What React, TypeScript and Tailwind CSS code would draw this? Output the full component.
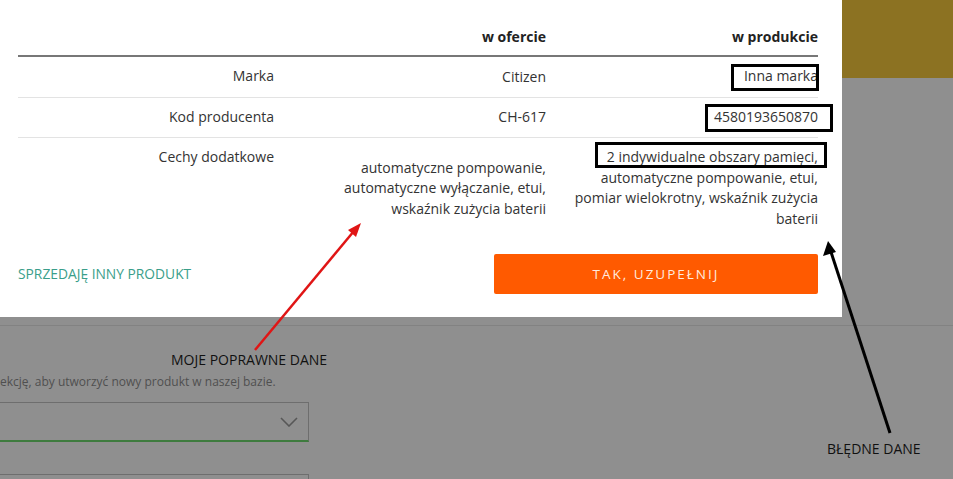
import React from 'react';

const font = { fontFamily: '"Open Sans", "Liberation Sans", sans-serif' };

const rows = [
  { label: 'Marka', offer: ['Citizen'], prod: ['Inna marka'] },
  { label: 'Kod producenta', offer: ['CH-617'], prod: ['4580193650870'] },
  {
    label: 'Cechy dodatkowe',
    offer: ['automatyczne pompowanie,', 'automatyczne wyłączanie, etui,', 'wskaźnik zużycia baterii'],
    prod: ['2 indywidualne obszary pamięci,', 'automatyczne pompowanie, etui,', 'pomiar wielokrotny, wskaźnik zużycia', 'baterii'],
  },
];

const Lines = ({ lines }: { lines: string[] }) => (
  <>
    {lines.map((l, i) => (
      <div key={i}>{l}</div>
    ))}
  </>
);

export default function App() {
  return (
    <div className="relative w-[953px] h-[479px] overflow-hidden bg-[#8f8f8f] text-[#333]" style={font}>
      {/* page behind the modal */}
      <div className="flex flex-col">
        <div className="flex justify-end">
          <div className="w-[111px] h-[78px] bg-[#8c7222]" />
        </div>
        <div className="mt-[247px] h-px bg-[#828282]" />
        <div className="w-[309px] pt-[48px]">
          <p className="text-[12px] leading-[16px] text-[#4f4f4f] whitespace-nowrap">
            ekcję, aby utworzyć nowy produkt w naszej bazie.
          </p>
          <div className="mt-[12px] h-[40px] -ml-[10px] w-[319px] border border-[#6e6e6e] border-b-2 border-b-[#3e7b3e] flex items-center justify-end pr-[10px]">
            <svg width="18" height="10" viewBox="0 0 18 10" fill="none">
              <path d="M1 1l8 8 8-8" stroke="#575757" strokeWidth="1.6" />
            </svg>
          </div>
          <div className="mt-[32px] h-[40px] -ml-[10px] w-[319px] border border-[#6e6e6e]" />
        </div>
      </div>

      {/* modal */}
      <div className="absolute left-0 top-0 w-[842px] h-[317px] bg-white px-[18px]">
        <div className="w-[800px]">
          <div className="grid grid-cols-[256px_272px_272px] pt-[27px] pb-[8px] border-b-2 border-[#777] text-[14px] leading-[20px] font-bold text-[#222]">
            <div />
            <div className="text-right">w ofercie</div>
            <div className="text-right">w produkcie</div>
          </div>
          {rows.map((r, i) => (
            <div
              key={r.label}
              className={`grid grid-cols-[256px_272px_272px] text-[14px] ${i < rows.length - 1 ? 'border-b border-[#e3e3e3]' : ''}`}
            >
              <div className="text-right pt-[9px] pb-[10px] leading-[20px]">{r.label}</div>
              <div className="text-right self-center leading-[20.5px] pl-[20px]">
                <Lines lines={r.offer} />
              </div>
              <div className="text-right pt-[9px] pb-[10px] leading-[20.5px] pl-[20px]">
                <Lines lines={r.prod} />
              </div>
            </div>
          ))}
          <div className="mt-[15px] flex items-center justify-between">
            <span className="text-[13.8px] text-[#3a9e8a]">SPRZEDAJĘ INNY PRODUKT</span>
            <button className="w-[324px] h-[40px] rounded-[2px] bg-[#ff5a00] text-[13.5px] tracking-[2px] text-[#ffeadf]">
              TAK, UZUPEŁNIJ
            </button>
          </div>
        </div>
      </div>

      {/* annotation boxes */}
      <div className="absolute left-[731px] top-[64px] w-[88px] h-[27px] border-[3px] border-black" />
      <div className="absolute left-[705px] top-[104px] w-[128px] h-[28px] border-[3px] border-black" />
      <div className="absolute left-[595px] top-[142px] w-[232px] h-[26px] border-[3px] border-black" />

      {/* arrows */}
      <svg className="absolute left-0 top-0" width="953" height="479">
        <line x1="255" y1="350" x2="354" y2="231" stroke="#e01515" strokeWidth="2.5" />
        <polygon points="361,223 348,230 356,237" fill="#e01515" />
        <line x1="890" y1="433" x2="831" y2="252" stroke="#000" strokeWidth="3" />
        <polygon points="828,241 823,256 836,252" fill="#000" />
      </svg>
      <span className="absolute left-[171px] top-[350px] text-[14px] leading-[19px] text-[#111]">MOJE POPRAWNE DANE</span>
      <span className="absolute left-[827px] top-[439px] text-[14px] leading-[19px] text-[#111]">BŁĘDNE DANE</span>
    </div>
  );
}
